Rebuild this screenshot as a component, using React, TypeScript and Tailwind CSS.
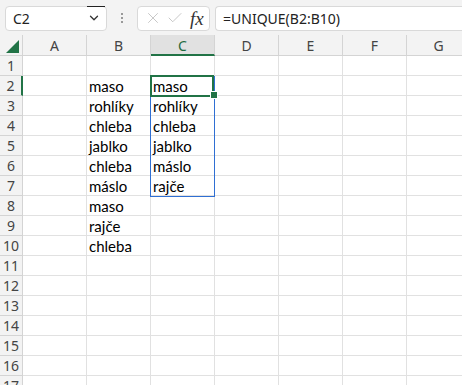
import { X, Check, ChevronDown } from 'lucide-react'

const cols = ['A', 'B', 'C', 'D', 'E', 'F', 'G']

const colB: Record<number, string> = {
  2: 'maso',
  3: 'rohlíky',
  4: 'chleba',
  5: 'jablko',
  6: 'chleba',
  7: 'máslo',
  8: 'maso',
  9: 'rajče',
  10: 'chleba',
}

const colC: Record<number, string> = {
  2: 'maso',
  3: 'rohlíky',
  4: 'chleba',
  5: 'jablko',
  6: 'máslo',
  7: 'rajče',
}

const rows = Array.from({ length: 17 }, (_, i) => i + 1)

function Toolbar() {
  return (
    <div className="flex h-[35px] items-center gap-[5px] bg-[#f3f3f3] pl-[5px] pt-[1px]">
      <div className="relative flex h-[25px] w-[102px] items-center justify-between rounded-[4px] border border-[#d9d9d9] bg-white pl-[7px] pr-[5px]">
        <span className="text-[14px] text-[#222]">C2</span>
        <ChevronDown size={14} strokeWidth={2.2} className="text-[#333]" />
        <div className="absolute right-[1px] top-[-1px] h-[1px] w-[18px] bg-[#222]" />
      </div>
      <div className="flex w-[20px] flex-col items-center gap-[2px]">
        <span className="h-[2px] w-[2px] bg-[#999]" />
        <span className="h-[2px] w-[2px] bg-[#999]" />
        <span className="h-[2px] w-[2px] bg-[#999]" />
      </div>
      <div className="flex h-[25px] w-[73px] items-center rounded-[4px] border border-[#d9d9d9] bg-white pl-[6px]">
        <X size={18} strokeWidth={1} className="text-[#b5b5b5]" />
        <Check size={18} strokeWidth={1} className="ml-[4px] text-[#b5b5b5]" />
        <span className="ml-[6px] text-[19px] italic leading-none text-[#333] [font-family:'Liberation_Serif',serif]">fx</span>
      </div>
      <div className="flex h-[25px] flex-1 items-center rounded-l-[4px] border border-r-0 border-[#d9d9d9] bg-white pl-[7px]">
        <span className="text-[14px] text-[#222]">=UNIQUE(B2:B10)</span>
      </div>
    </div>
  )
}

function Grid() {
  return (
    <div className="relative">
      <div className="grid grid-cols-[23px_repeat(7,64px)] bg-white">
        <div className="flex h-[21px] items-end justify-end border-b border-r border-[#d4d4d4] bg-[#f3f3f3] pb-[2px] pr-[3px]">
          <svg width="13" height="13" viewBox="0 0 13 13">
            <polygon points="13,0 13,13 0,13" fill="#217346" />
          </svg>
        </div>
        {cols.map((c) => (
          <div
            key={c}
            className={
              c === 'C'
                ? 'flex h-[21px] items-center justify-center border-b-2 border-r border-b-[#217346] border-r-[#d4d4d4] bg-[#e1e1e1] pt-[1px] text-[14px] text-[#1e6a40]'
                : 'flex h-[21px] items-center justify-center border-b border-r border-[#d4d4d4] bg-[#f3f3f3] text-[14px] text-[#444]'
            }
          >
            {c}
          </div>
        ))}
        {rows.map((r) => (
          <Row key={r} r={r} />
        ))}
      </div>
      <div className="absolute left-[150px] top-[41px] h-[121px] w-[65px] border border-[#2f6fd3]" />
      <div className="absolute left-[150px] top-[40px] h-[22px] w-[64px] border-2 border-[#217346]" />
      <div className="absolute left-[210px] top-[56px] h-[8px] w-[8px] border border-white bg-[#217346]" />
    </div>
  )
}

function Row({ r }: { r: number }) {
  return (
    <>
      <div
        className={
          r === 2
            ? 'flex h-[20px] items-center justify-center border-b border-r-2 border-b-[#d4d4d4] border-r-[#217346] bg-[#f3f3f3] text-[14px] text-[#444]'
            : 'flex h-[20px] items-center justify-center border-b border-r border-[#d4d4d4] bg-[#f3f3f3] text-[14px] text-[#444]'
        }
      >
        {r}
      </div>
      {cols.map((c) => {
        const v = c === 'B' ? colB[r] : c === 'C' ? colC[r] : undefined
        return (
          <div
            key={c}
            className="flex h-[20px] items-end overflow-hidden whitespace-nowrap border-b border-r border-[#e1e1e1] pl-[2px] text-[15px] leading-[17px] text-black [font-family:Lato,sans-serif]"
          >
            {v}
          </div>
        )
      })}
    </>
  )
}

export default function App() {
  return (
    <div className="h-[385px] w-[462px] overflow-hidden bg-white [font-family:'Noto_Sans',sans-serif]">
      <Toolbar />
      <Grid />
    </div>
  )
}
